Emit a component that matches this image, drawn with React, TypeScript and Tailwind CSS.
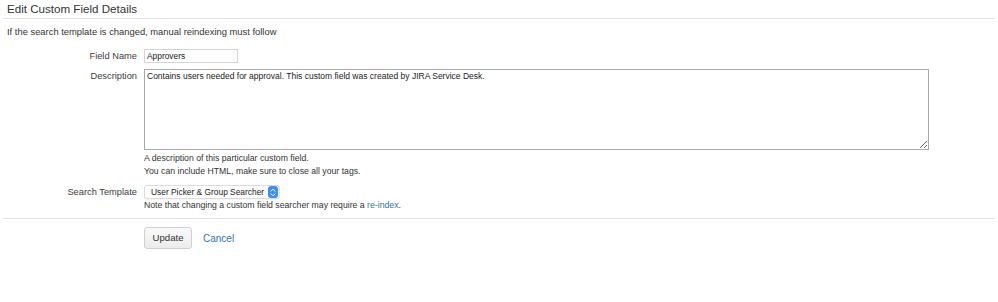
import { useState } from "react";

// Edit custom field form: label column on the left, fields on the right.

function Label({ children }: { children: React.ReactNode }) {
  return (
    <div className="text-right text-[9.3px] leading-[14px] text-[#3d3d3d]">{children}</div>
  );
}

function Stepper() {
  return (
    <span className="flex h-[12px] w-[10px] items-center justify-center rounded-[3px] bg-[#3d8ff5]">
      <svg width="6" height="9" viewBox="0 0 6 9" fill="none" aria-hidden>
        <path d="M1 3.2 L3 1.2 L5 3.2" stroke="white" strokeWidth="1" strokeLinecap="round" strokeLinejoin="round" />
        <path d="M1 5.8 L3 7.8 L5 5.8" stroke="white" strokeWidth="1" strokeLinecap="round" strokeLinejoin="round" />
      </svg>
    </span>
  );
}

export default function App() {
  const [name, setName] = useState("Approvers");
  const [desc, setDesc] = useState(
    "Contains users needed for approval. This custom field was created by JIRA Service Desk."
  );

  return (
    <div className="mx-[3px] bg-white font-['Liberation_Sans',Arial,sans-serif] text-[#333]">
      <h2 className="h-[19px] border-b border-[#e3e3e3] pl-[4px] text-[11.6px] leading-[18px] font-normal text-[#333]">
        Edit Custom Field Details
      </h2>
      <p className="mt-[7px] pl-[4px] text-[9.4px] leading-[12px]">
        If the search template is changed, manual reindexing must follow
      </p>

      <div className="mt-[11px] border-b border-[#e3e3e3] pb-[7px]">
        <div className="grid grid-cols-[134px_1fr] gap-x-[7px]">
          <Label>Field Name</Label>
          <div>
            <input
              value={name}
              onChange={(e) => setName(e.target.value)}
              className="block h-[14px] w-[94px] border border-[#d4d4d4] px-[2px] text-[8.4px] leading-[12px] text-[#222] outline-none"
            />
          </div>

          <div className="mt-[6px]">
            <Label>Description</Label>
          </div>
          <div className="mt-[6px]">
            <textarea
              value={desc}
              onChange={(e) => setDesc(e.target.value)}
              className="block h-[81px] w-[785px] border border-[#a9a9a9] px-[2px] py-[1px] text-[8.5px] leading-[11px] text-[#222] outline-none"
            />
            <div className="mt-[2px] text-[8.7px] leading-[13px]">
              <div>A description of this particular custom field.</div>
              <div>You can include HTML, make sure to close all your tags.</div>
            </div>
          </div>

          <div className="mt-[7px]">
            <Label>Search Template</Label>
          </div>
          <div className="mt-[7px]">
            <div className="flex h-[14px] w-[136px] items-center justify-between rounded-[3px] border border-[#dcdcdc] bg-white pl-[6px] pr-[1px] shadow-[0_0.5px_0.5px_rgba(0,0,0,0.08)]">
              <span className="text-[8.4px] leading-[12px] text-[#222]">User Picker &amp; Group Searcher</span>
              <Stepper />
            </div>
            <div className="text-[8.7px] leading-[12px]">
              Note that changing a custom field searcher may require a{" "}
              <a href="#" className="text-[#3572b0]">
                re-index
              </a>
              .
            </div>
          </div>
        </div>
      </div>

      <div className="mt-[8px] flex items-center gap-[11px] pl-[141px]">
        <button className="h-[22px] w-[48px] rounded-[3px] border border-[#cfcfcf] bg-gradient-to-b from-[#fafafa] to-[#ececec] text-[9.6px] text-[#333]">
          Update
        </button>
        <a href="#" className="text-[10px] text-[#3572b0]">
          Cancel
        </a>
      </div>
    </div>
  );
}
